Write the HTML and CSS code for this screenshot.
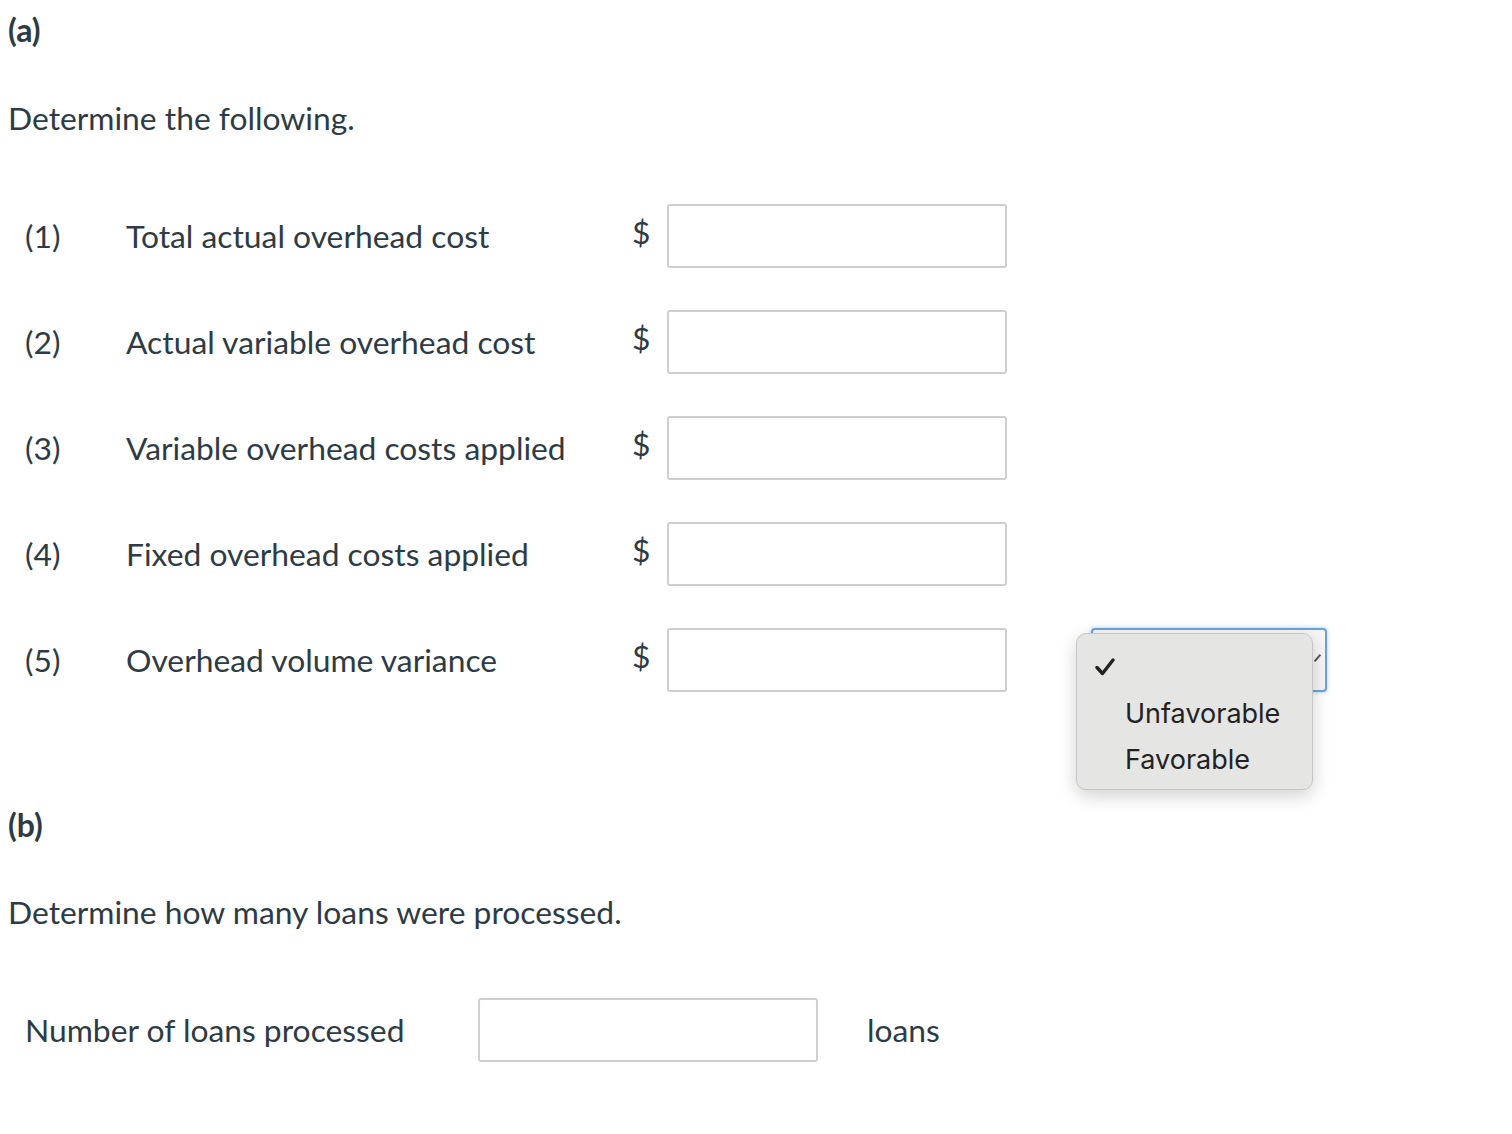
FILE: index.html
```html
<!DOCTYPE html>
<html lang="en">
<head>
  <meta charset="UTF-8">
  <title>Overhead Variance</title>
  <link rel="stylesheet" href="styles.css">
</head>
<body>
  <div class="part-label">(a)</div>
  <p class="prompt prompt-a">Determine the following.</p>

  <div class="answers">
    <div class="row">
      <span class="num">(1)</span>
      <span class="label">Total actual overhead cost</span>
      <span class="dollar">$</span>
      <input type="text" class="answer">
    </div>
    <div class="row">
      <span class="num">(2)</span>
      <span class="label">Actual variable overhead cost</span>
      <span class="dollar">$</span>
      <input type="text" class="answer">
    </div>
    <div class="row">
      <span class="num">(3)</span>
      <span class="label">Variable overhead costs applied</span>
      <span class="dollar">$</span>
      <input type="text" class="answer">
    </div>
    <div class="row">
      <span class="num">(4)</span>
      <span class="label">Fixed overhead costs applied</span>
      <span class="dollar">$</span>
      <input type="text" class="answer">
    </div>
    <div class="row">
      <span class="num">(5)</span>
      <span class="label">Overhead volume variance</span>
      <span class="dollar">$</span>
      <input type="text" class="answer">
      <div class="select-wrap">
        <div class="select-box">
          <span class="caret"></span>
        </div>
        <div class="menu">
          <div class="menu-item checked">
            <svg class="check" viewBox="0 0 20 18" width="20" height="18">
              <path d="M2 9.5 L7.5 15.5 L18 2" fill="none" stroke="#222" stroke-width="3.4" stroke-linecap="round" stroke-linejoin="round"/>
            </svg>
          </div>
          <div class="menu-item">Unfavorable</div>
          <div class="menu-item">Favorable</div>
        </div>
      </div>
    </div>
  </div>

  <div class="part-label part-b">(b)</div>
  <p class="prompt prompt-b">Determine how many loans were processed.</p>

  <div class="loans-row">
    <span class="loans-label">Number of loans processed</span>
    <input type="text" class="answer">
    <span class="unit">loans</span>
  </div>
</body>
</html>
```

FILE: styles.css
```css
body {
  margin: 0;
  padding: 0 8px;
  font-family: Lato, "Open Sans", sans-serif;
  color: #2d3b45;
  background: #fff;
}

.part-label {
  font-size: 32px;
  font-weight: bold;
  line-height: 60px;
}

.part-b {
  margin-top: 113px;
  line-height: 40px;
}

.prompt {
  font-size: 31.8px;
  line-height: 44px;
  margin: 36px 0 0;
}

.prompt-b {
  margin-top: 45px;
}

.answers {
  margin-top: 64px;
  display: flex;
  flex-direction: column;
  gap: 42px;
}

.row {
  display: flex;
  align-items: center;
  height: 64px;
  padding-left: 17px;
  font-size: 31.8px;
}

.num {
  width: 101px;
}

.label {
  width: 506px;
}

.dollar {
  width: 35px;
  margin-top: -8px;
}

.answer {
  box-sizing: border-box;
  width: 340px;
  height: 64px;
  margin: 0;
  border: 2px solid #cfcfcf;
  border-radius: 3px;
  background: #fff;
  font-size: 28px;
  font-family: inherit;
}

.select-wrap {
  position: relative;
  margin-left: 84px;
}

.select-box {
  box-sizing: border-box;
  width: 236px;
  height: 64px;
  border: 2px solid #6aa2dc;
  border-radius: 4px;
  background: #f6f6f6;
  box-shadow: 0 0 4px rgba(90, 150, 220, 0.5);
}

.caret {
  position: absolute;
  right: 5px;
  top: 29px;
  width: 9px;
  height: 2px;
  background: #555;
  transform: rotate(-50deg);
}

.menu {
  position: absolute;
  left: -15px;
  top: 5px;
  box-sizing: border-box;
  width: 237px;
  height: 157px;
  padding-top: 11px;
  background: #e5e5e4;
  border: 1px solid #c6c6c6;
  border-radius: 10px;
  box-shadow: 0 6px 18px rgba(0, 0, 0, 0.18);
  font-family: Inter, "Noto Sans", sans-serif;
  font-size: 27px;
  color: #222;
}

.menu-item {
  height: 46px;
  line-height: 46px;
  padding-left: 48px;
}

.menu-item.checked {
  position: relative;
}

.check {
  position: absolute;
  left: 18px;
  top: 13px;
}

.loans-row {
  display: flex;
  align-items: center;
  height: 64px;
  margin-top: 64px;
  padding-left: 17px;
  font-size: 31.8px;
}

.loans-label {
  width: 453px;
}

.unit {
  margin-left: 49px;
}
```
